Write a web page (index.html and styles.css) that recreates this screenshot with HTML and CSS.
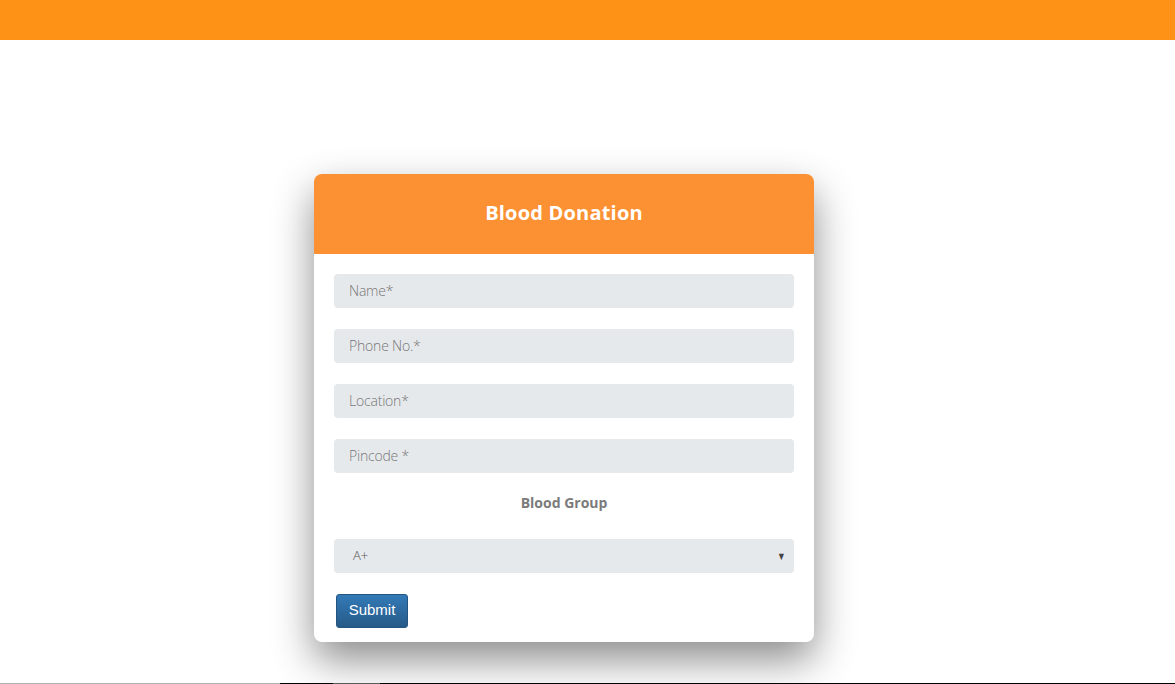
FILE: index.html
```html
<!DOCTYPE html>
<html>
<head>
<meta charset="utf-8">
<link rel="stylesheet" href="styles.css">
</head>
<body>
<div class="topbar"></div>
<main class="page">
  <form class="card">
    <div class="card-head"><h1 class="title">Blood Donation</h1></div>
    <div class="card-body">
      <input class="field" type="text" placeholder="Name*">
      <input class="field" type="text" placeholder="Phone No.*">
      <input class="field" type="text" placeholder="Location*">
      <input class="field" type="text" placeholder="Pincode *">
      <div class="label">Blood Group</div>
      <div class="select">
        <span class="select-val">A+</span>
        <span class="caret">▼</span>
      </div>
      <div class="actions"><button class="btn" type="button">Submit</button></div>
    </div>
  </form>
</main>
<div class="footer"></div>
</body>
</html>
```

FILE: styles.css
```css
html, body { margin: 0; padding: 0; background: #fff; }
body { font-family: "Open Sans", "Liberation Sans", sans-serif; height: 684px; overflow: hidden; display: flex; flex-direction: column; }
.topbar { height: 40px; background: #fd9216; flex: none; }
.page { height: 643px; flex: none; padding-top: 134px; padding-left: 314px; box-sizing: border-box; }
.card { width: 500px; background: #fff; border-radius: 8px; box-shadow: 0 18px 40px rgba(0,0,0,0.45); overflow: hidden; }
.card-head { height: 80px; background: #fb9132; display: flex; align-items: center; justify-content: center; padding-bottom: 2px; box-sizing: border-box; }
.title { margin: 0; color: #fff; font-size: 20px; font-weight: 700; letter-spacing: 0.2px; line-height: 24px; }
.card-body { padding: 20px 20px 14px; display: flex; flex-direction: column; }
.field { display: block; height: 34px; border: none; border-radius: 4px; background: #e6e9ec; padding: 0 15px 2px; font-family: inherit; font-size: 14px; font-weight: 300; color: #555; margin: 0 0 21px; box-sizing: border-box; width: 100%; outline: none; letter-spacing: -0.2px; }
.field::placeholder { color: #767676; }
.label { text-align: center; font-size: 14px; font-weight: 700; color: #7b7b7b; height: 18px; line-height: 18px; margin-bottom: 27px; }
.select { height: 34px; border-radius: 4px; background: #e6e9ec; display: flex; align-items: center; justify-content: space-between; padding: 0 7px 2px 19px; box-sizing: border-box; }
.select-val { font-size: 13px; font-weight: 300; color: #555; }
.caret { font-size: 11px; color: #444; transform: scaleX(0.8); }
.actions { margin-top: 21px; padding-left: 2px; }
.btn { height: 34px; width: 72px; border: 1px solid #245580; border-radius: 3px; background: linear-gradient(#337ab7, #265a88); color: #fff; font-family: "Liberation Sans", Arial, sans-serif; font-size: 15px; font-weight: 400; padding: 0 0 3px; }
.footer { height: 1px; flex: none; background: linear-gradient(to right, #b0b0b0 0, #b0b0b0 280px, #000 280px, #000 333px, #5a5a5a 333px, #5a5a5a 380px, #000 380px); }
```
